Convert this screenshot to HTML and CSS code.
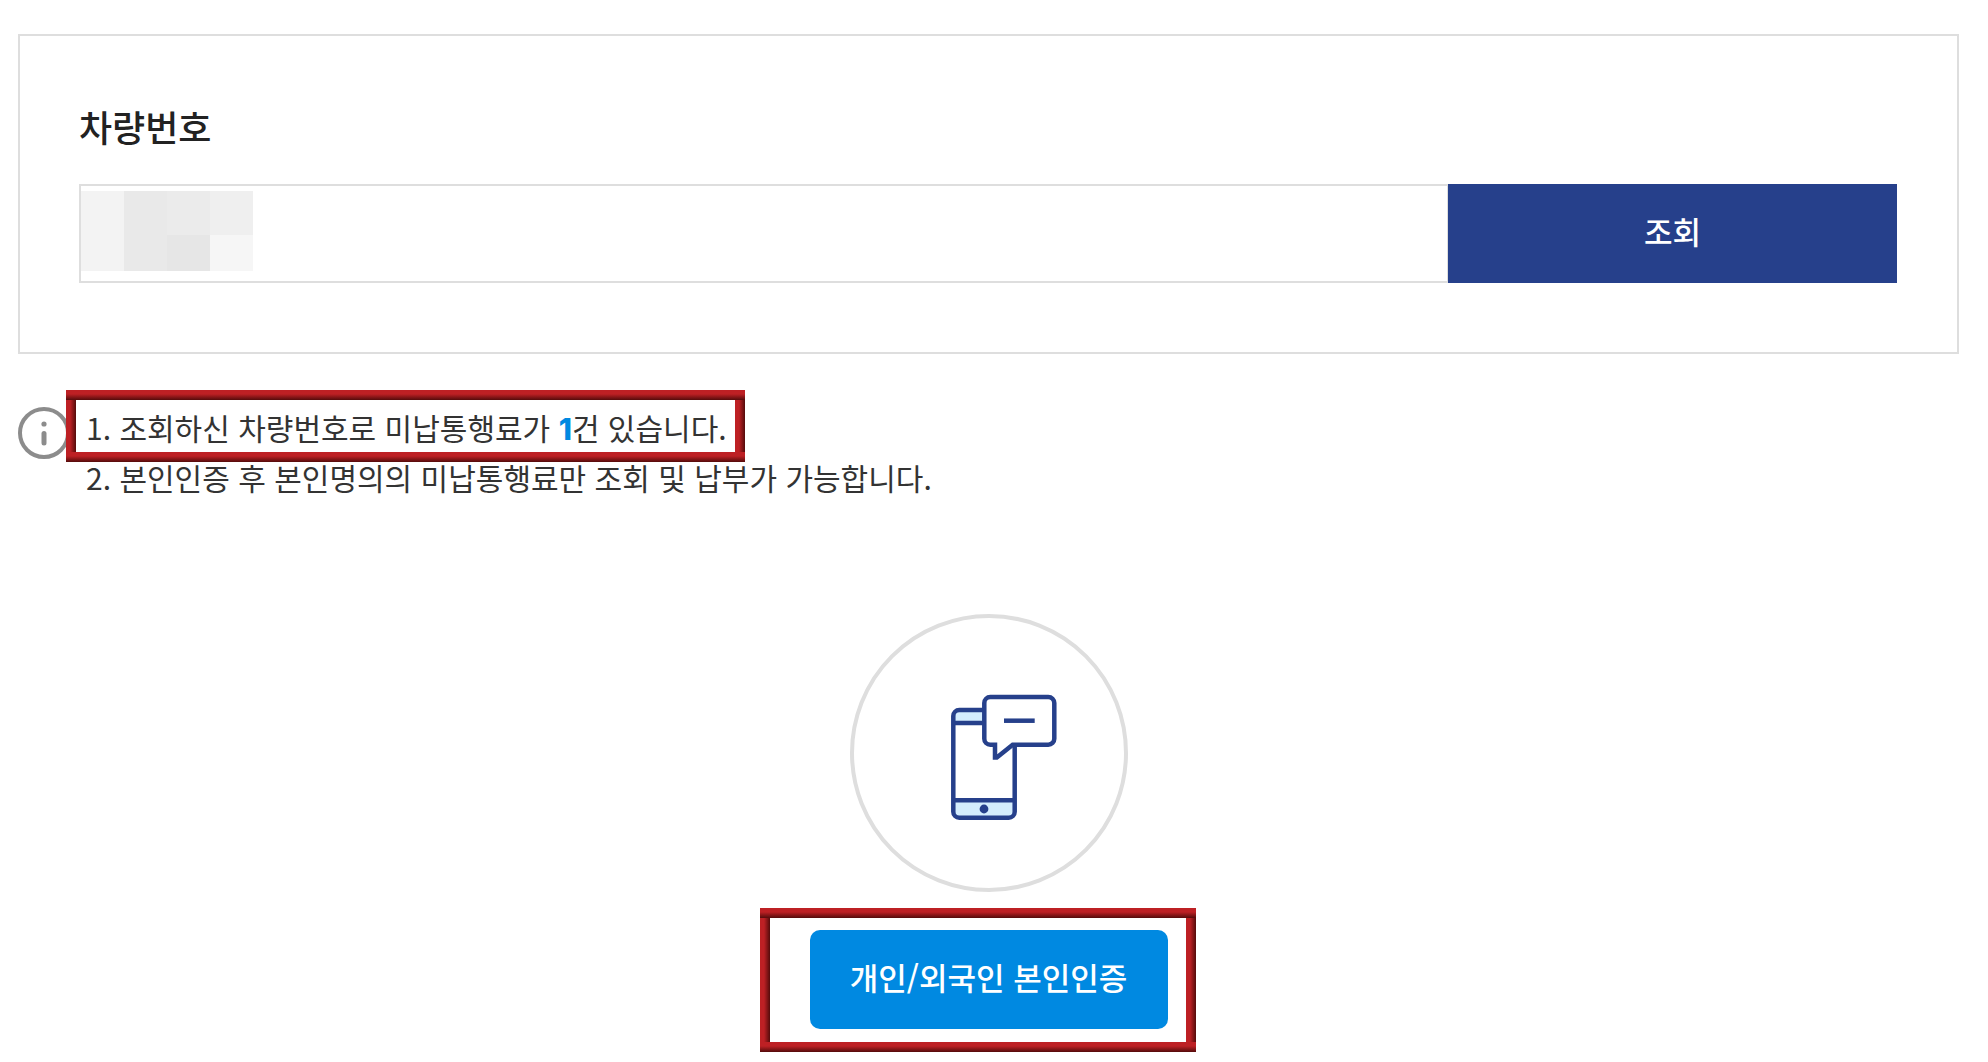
FILE: index.html
```html
<!DOCTYPE html>
<html lang="ko">
<head>
    <meta charset="UTF-8">
    <meta name="viewport" content="width=device-width, initial-scale=1.0">
    <title>미납통행료 조회</title>
    <link rel="stylesheet" href="styles.css">
</head>
<body>
    <form class="search-box">
        <label class="search-label" for="carNumber">차량번호</label>
        <div class="search-row">
            <div class="input-wrap">
                <input type="text" id="carNumber" class="car-input">
                <div class="mosaic">
                    <span class="m1"></span><span class="m2"></span><span class="m3"></span><span class="m4"></span>
                    <span class="m1"></span><span class="m2"></span><span class="m5"></span><span class="m6"></span>
                </div>
            </div>
            <button type="button" class="btn-search">조회</button>
        </div>
    </form>

    <div class="notice">
        <svg class="info-icon" viewBox="0 0 52 52">
            <circle cx="26" cy="26" r="24" fill="none" stroke="#8c8c8c" stroke-width="4"/>
            <circle cx="26" cy="17" r="2.6" fill="#8c8c8c"/>
            <path d="M26 26.5v9.5" stroke="#8c8c8c" stroke-width="5" stroke-linecap="round"/>
        </svg>
        <div class="notice-text">
            <p>1. 조회하신 차량번호로 미납통행료가 <strong>1</strong>건 있습니다.</p>
            <p>2. 본인인증 후 본인명의의 미납통행료만 조회 및 납부가 가능합니다.</p>
            <div class="red-frame frame-notice"></div>
        </div>
    </div>

    <div class="auth">
        <svg class="auth-icon" viewBox="0 0 278 278">
            <circle cx="139" cy="139" r="137" fill="#fff" stroke="#dedede" stroke-width="4"/>
            <rect x="103.3" y="96" width="61.4" height="107.7" rx="6" fill="#d4edfd"/>
            <rect x="103.3" y="109" width="61.4" height="77.3" fill="#fff"/>
            <g fill="none" stroke="#26408b" stroke-width="4.5">
                <rect x="103.3" y="96" width="61.4" height="107.7" rx="6"/>
                <path d="M103.3 109h61.4M103.3 186.3h61.4"/>
                <path fill="#fff" d="M140.3 83h58a6 6 0 0 1 6 6v35.7a6 6 0 0 1-6 6h-35.6l-15.9 12.9h-1.8v-12.9h-4.7a6 6 0 0 1-6-6V89a6 6 0 0 1 6-6z"/>
                <path d="M154 106.7h30.7"/>
            </g>
            <circle cx="134" cy="195" r="4.4" fill="#26408b"/>
        </svg>
        <div class="auth-action">
            <button type="button" class="btn-auth">개인/외국인 본인인증</button>
            <div class="red-frame frame-auth"></div>
        </div>
    </div>
</body>
</html>
```

FILE: styles.css
```css
* {
    box-sizing: border-box;
}
body {
    margin: 0;
    padding: 34px 29px 32px 18px;
    background-color: #fff;
    color: #333;
    font-family: "Noto Sans CJK KR", sans-serif;
    font-size: 30px;
}
button {
    border: none;
    padding: 0 0 6px;
    color: #fff;
    font-family: inherit;
    font-size: 31px;
    font-weight: 500;
    cursor: pointer;
}
.search-box {
    border: 2px solid #dedede;
    padding: 66px 60px 69px 59px;
}
.search-label {
    display: block;
    margin-bottom: 34px;
    color: #222;
    font-size: 36px;
    font-weight: 500;
    line-height: 48px;
}
.search-row {
    display: flex;
    height: 99px;
}
.input-wrap {
    position: relative;
    flex: 1;
}
.car-input {
    width: 100%;
    height: 100%;
    border: 2px solid #dedede;
    border-right-width: 1px;
    padding: 0 20px;
    font-family: inherit;
    font-size: 30px;
}
/* hides the plate number */
.mosaic {
    position: absolute;
    left: 2px;
    top: 7px;
    display: grid;
    grid-template-columns: repeat(4, 43px);
    grid-template-rows: 44px 36px;
}
.m1 { background-color: #f3f3f3; }
.m2 { background-color: #e9e9e9; }
.m3 { background-color: #ebebeb; }
.m4 { background-color: #efefef; }
.m5 { background-color: #e6e6e6; }
.m6 { background-color: #f6f6f6; }
.btn-search {
    width: 449px;
    background-color: #26408b;
}

.notice {
    display: flex;
    align-items: flex-start;
    gap: 16px;
    margin-top: 48px;
}
.info-icon {
    width: 52px;
    height: 52px;
    margin-top: 5px;
}
.notice-text {
    position: relative;
}
.notice-text p {
    margin: 0;
    line-height: 50px;
}
.notice-text strong {
    color: #0089e1;
    font-family: "Inter", sans-serif;
    font-weight: 800;
    line-height: 30px;
}

.auth {
    display: flex;
    flex-direction: column;
    align-items: center;
    margin-top: 112px;
}
.auth-icon {
    width: 278px;
    height: 278px;
}
.auth-action {
    position: relative;
    margin-top: 38px;
}
.btn-auth {
    display: block;
    width: 358px;
    height: 99px;
    border-radius: 10px;
    background-color: #0089e1;
}

/* bevelled red highlight */
.red-frame {
    position: absolute;
    pointer-events: none;
    background-image:
        linear-gradient(to bottom, #bd2024 40%, #540b0b),
        linear-gradient(to bottom, #bd2024 40%, #540b0b),
        linear-gradient(to right, #bd2024 40%, #540b0b),
        linear-gradient(to right, #bd2024 40%, #540b0b);
    background-position: top, bottom, left, right;
    background-size: 100% 10px, 100% 10px, 10px 100%, 10px 100%;
    background-repeat: no-repeat;
}
.frame-notice {
    left: -20px;
    top: -12px;
    width: 679px;
    height: 72px;
}
.frame-auth {
    left: -50px;
    top: -22px;
    width: 436px;
    height: 144px;
}
```
